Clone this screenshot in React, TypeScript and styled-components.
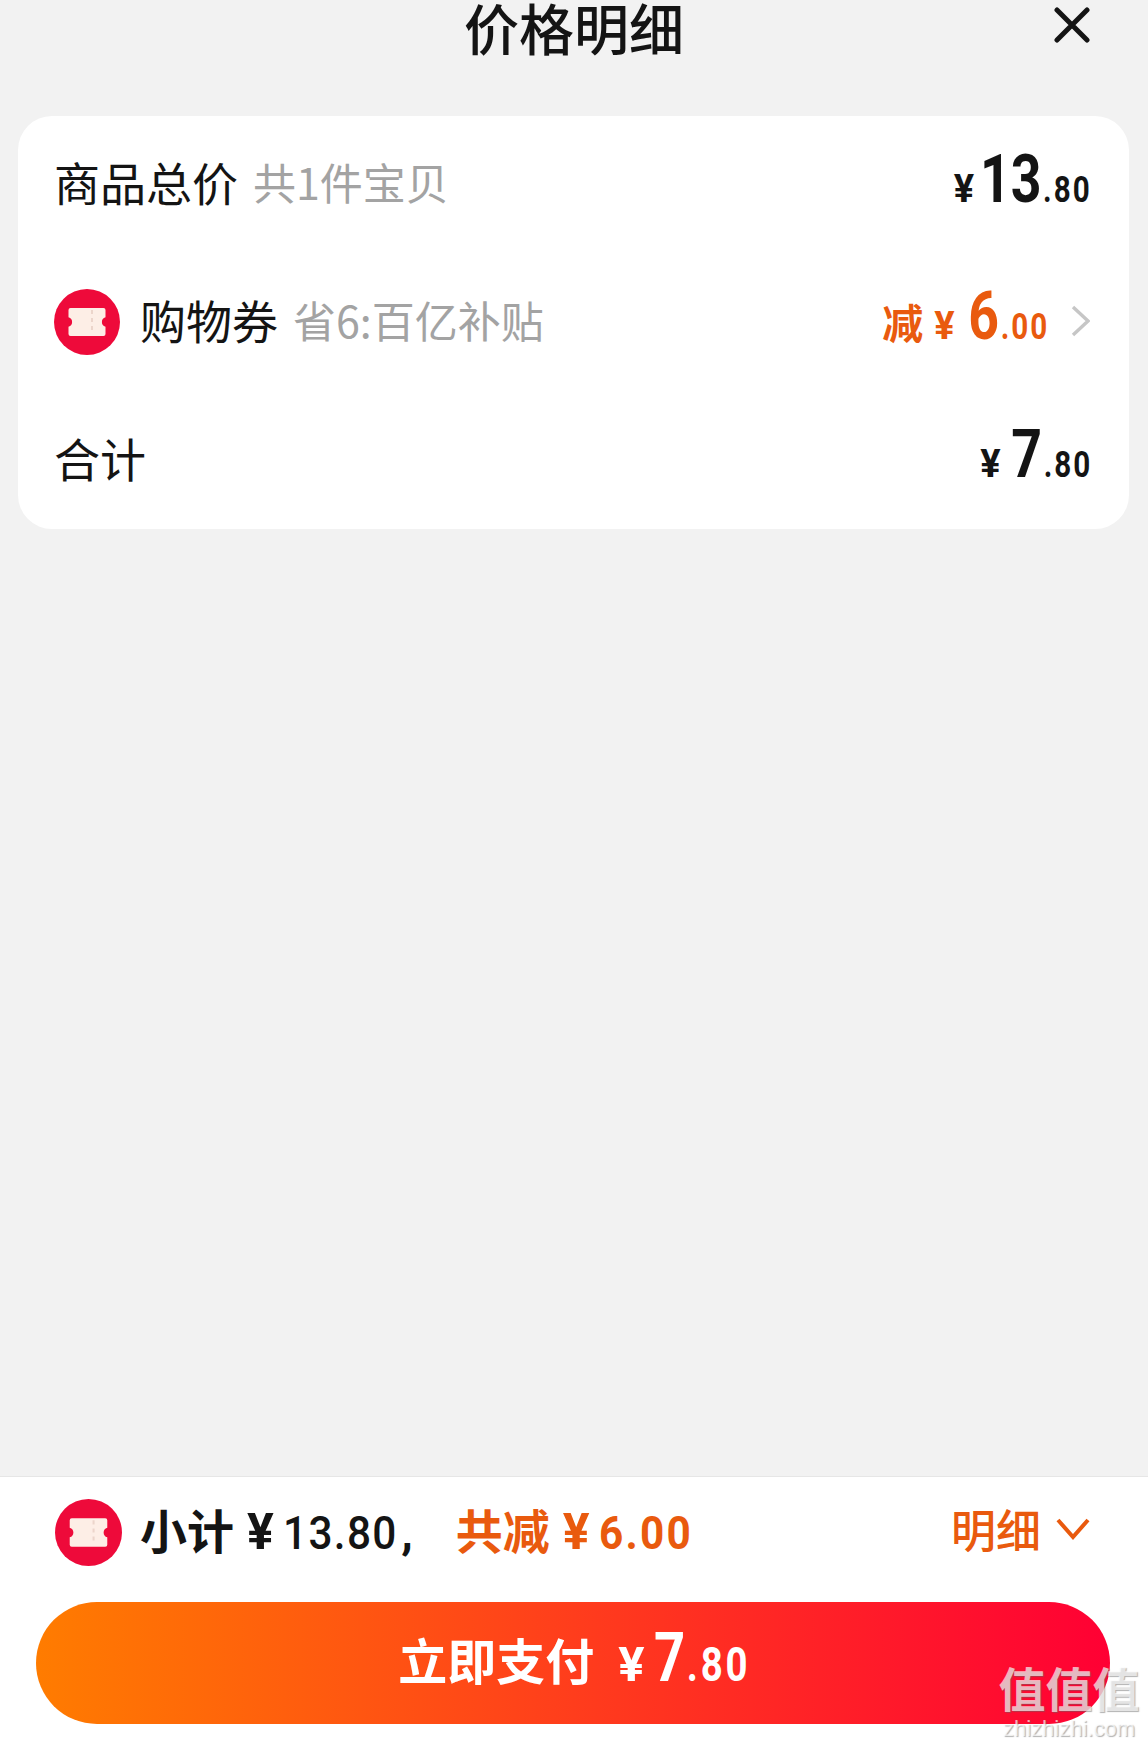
import React from "react";
import styled, { createGlobalStyle } from "styled-components";

const Global = createGlobalStyle`
  html, body { margin: 0; padding: 0; background: #f2f2f2; }
  #root { width: 1148px; height: 1747px; overflow: hidden; }
  * { box-sizing: border-box; }
`;

const CJK = `"Noto Sans CJK SC", "Liberation Sans", sans-serif`;
const NUM = `"Roboto", "Noto Sans CJK SC", sans-serif`;
const BLACK = "#141414";
const ORANGE = "#e95a0e";

const Page = styled.div`
  position: relative;
  width: 1148px;
  height: 1747px;
  display: flex;
  flex-direction: column;
  background: #f2f2f2;
  font-family: ${CJK};
  color: ${BLACK};
`;

const Header = styled.header`
  height: 116px;
  flex: none;
  display: grid;
  grid-template-columns: 1fr auto 1fr;
  padding: 0 58px;
`;

const Title = styled.h1`
  grid-column: 2;
  margin: 0;
  font-size: 55px;
  line-height: 52px;
  font-weight: 500;
`;

const CloseButton = styled.button`
  grid-column: 3;
  justify-self: end;
  align-self: start;
  margin-top: 7px;
  width: 36px;
  height: 36px;
  padding: 0;
  border: 0;
  background: none;
  display: block;
`;

const Card = styled.section`
  flex: none;
  margin: 0 19px 0 18px;
  height: 413px;
  border-radius: 34px;
  background: #fff;
  display: grid;
  grid-auto-rows: 1fr;
  padding: 0 39px 0 36px;
`;

const Row = styled.div`
  display: flex;
  align-items: center;
  justify-content: space-between;
`;

const Left = styled.div`
  display: flex;
  align-items: center;
`;

const Label = styled.span<{ $indent?: number }>`
  font-size: 46px;
  line-height: 56px;
  margin-bottom: 7px;
  margin-left: ${(p) => p.$indent ?? 0}px;
  color: ${BLACK};
`;

const Hint = styled.span`
  font-size: 43px;
  line-height: 56px;
  margin-bottom: 7px;
  margin-left: 15px;
  color: #a3a3a3;
  white-space: nowrap;
`;

const Amount = styled.div<{ $color?: string; $lift?: number }>`
  display: flex;
  align-items: baseline;
  margin-bottom: ${(p) => p.$lift ?? 11}px;
  color: ${(p) => p.$color ?? BLACK};
  font-family: ${NUM};
  font-weight: 700;
  white-space: nowrap;
`;

const Yen = styled.span<{ $size: number; $gap: number }>`
  font-size: ${(p) => p.$size}px;
  margin-right: ${(p) => p.$gap}px;
  line-height: 1;
`;

/* Digits in the reference are a condensed DIN; the installed Roboto is squeezed to its width. */
const Squeezed = styled.span<{ $trim: number }>`
  display: inline-block;
  transform: scaleX(0.8);
  transform-origin: right center;
  margin-left: -${(p) => p.$trim}px;
  margin-right: -2px;
  line-height: 1;
`;

const Whole = styled.span<{ $size: number }>`
  font-size: ${(p) => p.$size}px;
  line-height: 1;
`;

const Cents = styled.span<{ $size: number }>`
  font-size: ${(p) => p.$size}px;
  letter-spacing: 0.07em;
  margin-left: 2px;
  line-height: 1;
`;

const Cut = styled.span`
  font-family: ${CJK};
  font-size: 41px;
  font-weight: 700;
  margin-right: 11px;
  line-height: 1;
`;

const RightGroup = styled.div`
  display: flex;
  align-items: center;
`;

const Chevron = styled.svg<{ $left: number; $lift?: number }>`
  display: block;
  margin-left: ${(p) => p.$left}px;
  margin-bottom: ${(p) => p.$lift ?? 0}px;
  flex: none;
`;

const Spacer = styled.div`
  flex: 1;
`;

const Footer = styled.footer`
  flex: none;
  height: 271px;
  background: #fff;
  border-top: 1px solid #e6e6e6;
  padding: 0 38px 22px 36px;
  display: flex;
  flex-direction: column;
`;

const Summary = styled.div`
  height: 110px;
  margin-bottom: 15px;
  padding: 0 20px 0 19px;
  display: flex;
  align-items: center;
  justify-content: space-between;
`;

const SummaryText = styled.div`
  display: flex;
  align-items: baseline;
  margin-left: 18px;
  margin-bottom: 6px;
`;

const SumLabel = styled.span<{ $color?: string }>`
  font-size: 47px;
  font-weight: 700;
  line-height: 56px;
  color: ${(p) => p.$color ?? BLACK};
`;

const SumYen = styled.span<{ $color?: string }>`
  font-family: ${NUM};
  font-size: 50px;
  font-weight: 700;
  line-height: 1;
  margin: 0 9px 0 13px;
  color: ${(p) => p.$color ?? BLACK};
`;

const SumNumber = styled.span<{ $color?: string; $weight: number; $spacing: number; $trim: number }>`
  display: inline-block;
  font-family: ${NUM};
  font-size: 47px;
  line-height: 1;
  font-weight: ${(p) => p.$weight};
  letter-spacing: ${(p) => p.$spacing}px;
  transform: scaleX(0.9);
  transform-origin: left center;
  margin-right: -${(p) => p.$trim}px;
  color: ${(p) => p.$color ?? BLACK};
`;

const SumComma = styled.span`
  font-family: ${NUM};
  font-size: 47px;
  font-weight: 700;
  line-height: 1;
  margin-left: 3px;
  margin-right: 43px;
`;

const Detail = styled.div`
  display: flex;
  align-items: center;
  color: ${ORANGE};
  font-size: 45px;
  font-weight: 500;
  line-height: 56px;
  padding-bottom: 6px;
`;

const PayButton = styled.button`
  width: 1074px;
  height: 122px;
  flex: none;
  border: 0;
  padding: 0 0 10px;
  border-radius: 61px;
  background: linear-gradient(90deg, #ff7c00 0%, #ff3d1c 50%, #ff0034 100%);
  color: #fff;
  display: flex;
  align-items: center;
  justify-content: center;
  font-family: ${CJK};
`;

const PayLabel = styled.span`
  font-size: 49px;
  font-weight: 700;
  margin-right: 24px;
  line-height: 1;
`;

const Watermark = styled.div`
  position: absolute;
  left: 997px;
  top: 1660px;
  width: 144px;
  text-align: center;
  color: rgba(255, 255, 255, 0.68);
  text-shadow: 1px 1px 1px rgba(100, 100, 100, 0.5);
  pointer-events: none;
`;

const WmBig = styled.div`
  font-family: ${CJK};
  font-size: 47px;
  font-weight: 700;
  line-height: 54px;
  white-space: nowrap;
`;

const WmSmall = styled.div`
  font-family: "Liberation Sans", sans-serif;
  font-size: 22px;
  line-height: 24px;
  margin-top: 3px;
  white-space: nowrap;
`;

const Ticket = ({ size }: { size: number }) => (
  <svg width={size} height={size} viewBox="0 0 66 66" style={{ flex: "none", display: "block" }}>
    <circle cx="33" cy="33" r="33" fill="#ee0a3a" />
    <path
      d="M16.5 19h33a2 2 0 0 1 2 2v7.2a5 5 0 0 0 0 9.6V45a2 2 0 0 1-2 2h-33a2 2 0 0 1-2-2v-7.2a5 5 0 0 0 0-9.6V21a2 2 0 0 1 2-2z"
      fill="#fdeee6"
    />
    <path d="M38 21v24" stroke="#ecd5cb" strokeWidth="2" strokeDasharray="4 4" fill="none" />
  </svg>
);

export default function App() {
  return (
    <Page>
      <Global />
      <Header>
        <Title>价格明细</Title>
        <CloseButton aria-label="关闭">
          <svg width="36" height="36" viewBox="0 0 36 36" style={{ display: "block" }}>
            <path d="M3 3l30 30M33 3L3 33" stroke="#141414" strokeWidth="5" strokeLinecap="round" fill="none" />
          </svg>
        </CloseButton>
      </Header>

      <Card>
        <Row>
          <Left>
            <Label>商品总价</Label>
            <Hint>共1件宝贝</Hint>
          </Left>
          <Amount>
            <Yen $size={38} $gap={7}>¥</Yen>
            <Squeezed $trim={29}>
              <Whole $size={67}>13</Whole>
              <Cents $size={37}>.80</Cents>
            </Squeezed>
          </Amount>
        </Row>
        <Row>
          <Left>
            <Ticket size={66} />
            <Label $indent={20}>购物券</Label>
            <Hint>省6:百亿补贴</Hint>
          </Left>
          <RightGroup>
            <Amount $color={ORANGE}>
              <Cut>减</Cut>
              <Yen $size={38} $gap={15}>¥</Yen>
              <Squeezed $trim={22}>
                <Whole $size={67}>6</Whole>
                <Cents $size={37}>.00</Cents>
              </Squeezed>
            </Amount>
            <Chevron $left={24} $lift={3} width="19" height="32" viewBox="0 0 19 32">
              <path d="M2 2l15 14L2 30" stroke="#c6c6c6" strokeWidth="3.4" fill="none" />
            </Chevron>
          </RightGroup>
        </Row>
        <Row>
          <Left>
            <Label>合计</Label>
          </Left>
          <Amount>
            <Yen $size={38} $gap={12}>¥</Yen>
            <Squeezed $trim={22}>
              <Whole $size={67}>7</Whole>
              <Cents $size={37}>.80</Cents>
            </Squeezed>
          </Amount>
        </Row>
      </Card>

      <Spacer />

      <Footer>
        <Summary>
          <Left>
            <Ticket size={67} />
            <SummaryText>
              <SumLabel>小计</SumLabel>
              <SumYen>¥</SumYen>
              <SumNumber $weight={500} $spacing={1.5} $trim={12}>13.80</SumNumber>
              <SumComma>,</SumComma>
              <SumLabel $color={ORANGE}>共减</SumLabel>
              <SumYen $color={ORANGE}>¥</SumYen>
              <SumNumber $weight={700} $spacing={2.5} $trim={10} $color={ORANGE}>6.00</SumNumber>
            </SummaryText>
          </Left>
          <Detail>
            明细
            <Chevron $left={15} width="34" height="22" viewBox="0 0 34 22">
              <path d="M2 2l15 17L32 2" stroke={ORANGE} strokeWidth="4" fill="none" />
            </Chevron>
          </Detail>
        </Summary>
        <PayButton>
          <PayLabel>立即支付</PayLabel>
          <Amount $color="#fff" $lift={0}>
            <Yen $size={49} $gap={10}>¥</Yen>
            <Squeezed $trim={25}>
              <Whole $size={68}>7</Whole>
              <Cents $size={48}>.80</Cents>
            </Squeezed>
          </Amount>
        </PayButton>
      </Footer>

      <Watermark>
        <WmBig>值值值</WmBig>
        <WmSmall>zhizhizhi.com</WmSmall>
      </Watermark>
    </Page>
  );
}
